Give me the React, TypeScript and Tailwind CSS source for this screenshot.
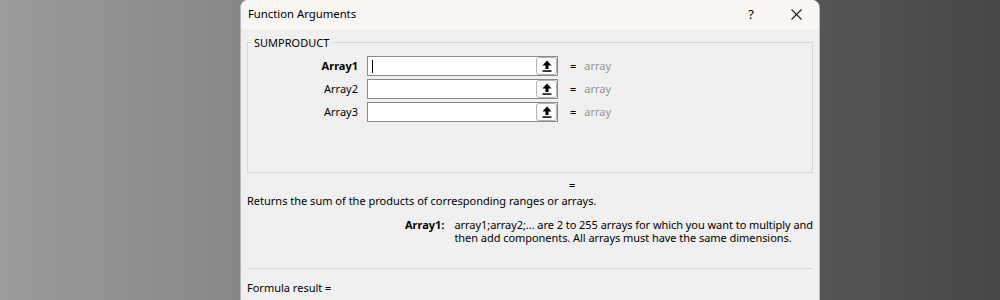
const UploadArrow = () => (
  <svg width="10" height="12" viewBox="0 0 10 12" className="block">
    <path d="M5 0.5 L9.5 5.5 H6.5 V9 H3.5 V5.5 H0.5 Z" fill="#000" />
    <rect x="0.5" y="10.3" width="9" height="1.5" fill="#000" />
  </svg>
);

const ArgRow = ({ label, bold, active }: { label: string; bold?: boolean; active?: boolean }) => (
  <div className="flex items-center h-[20px]">
    <div className={`w-[110px] text-right ${bold ? 'font-bold' : ''}`}>{label}</div>
    <div className="ml-[9px] w-[191px] h-[20px] border border-[#8a8a8a] bg-white flex items-center justify-between">
      <div className="pl-[4px] flex items-center">
        {active && <div className="w-[1px] h-[13px] bg-black" />}
      </div>
      <div className="w-[21px] h-[18px] border border-[#b4b4b4] rounded-[3px] bg-[#fdfdfd] flex items-center justify-center">
        <UploadArrow />
      </div>
    </div>
    <div className="ml-[12px]">=</div>
    <div className="ml-[8px] text-[#949494]">array</div>
  </div>
);

export default function App() {
  return (
    <div
      className="w-[1000px] h-[300px] overflow-hidden bg-[linear-gradient(to_right,#9b9b9b,#464646)] pl-[240px] text-[11px] text-black"
      style={{ fontFamily: '"Noto Sans", "Liberation Sans", sans-serif' }}
    >
      <div className="w-[580px] h-[300px] rounded-t-[8px] overflow-hidden border-x border-[#b8b8b8] flex flex-col bg-[#f0f0f0]">
        {/* title bar */}
        <div className="h-[29px] bg-[#f9f6f4] flex items-center pl-[7px] shrink-0">
          <span className="text-[11.3px]">Function Arguments</span>
          <span className="ml-auto text-[13px]">?</span>
          <svg width="11" height="11" viewBox="0 0 11 11" className="ml-[37px] mr-[17px]">
            <path d="M0.5 0.5 L10.5 10.5 M10.5 0.5 L0.5 10.5" stroke="#1a1a1a" strokeWidth="1.1" />
          </svg>
        </div>

        <div className="px-[6px] flex flex-col">
          {/* group box */}
          <div className="relative mt-[13px] h-[131px] border border-[#d8d8d8] pt-[13px] flex flex-col gap-[3px]">
            <span className="absolute -top-[8px] left-[4px] px-[2px] bg-[#f0f0f0] leading-[16px]">SUMPRODUCT</span>
            <ArgRow label="Array1" bold active />
            <ArgRow label="Array2" />
            <ArgRow label="Array3" />
          </div>

          <div className="mt-[4px] h-[16px] leading-[16px] pl-[322px]">=</div>
          <div className="h-[16px] leading-[16px] whitespace-nowrap">Returns the sum of the products of corresponding ranges or arrays.</div>

          <div className="mt-[9px] flex leading-[13px] whitespace-nowrap">
            <div className="w-[198px] text-right font-bold">Array1:</div>
            <div className="ml-[10px] tracking-[-0.05px]">
              array1;array2;... are 2 to 255 arrays for which you want to multiply and
              <br />
              then add components. All arrays must have the same dimensions.
            </div>
          </div>

          <div className="mt-[24px] mr-[1px] border-t border-[#d6d6d6]" />
          <div className="mt-[11px] h-[16px] leading-[16px]">Formula result =</div>
        </div>
      </div>
    </div>
  );
}
